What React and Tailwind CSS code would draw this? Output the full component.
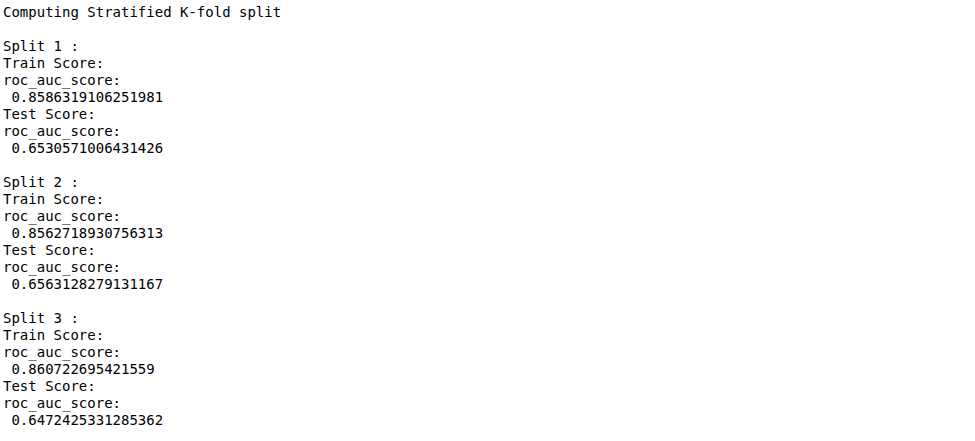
export default function App() {
  const splits = [
    { n: 1, train: '0.8586319106251981', test: '0.6530571006431426' },
    { n: 2, train: '0.8562718930756313', test: '0.6563128279131167' },
    { n: 3, train: '0.860722695421559', test: '0.6472425331285362' },
  ]

  return (
    <div className="w-[975px] h-[441px] bg-white overflow-hidden">
      <pre className="pl-[3px] pt-[4px] text-[14px] leading-[17px] text-black font-['DejaVu_Sans_Mono',monospace] whitespace-pre">
        {'Computing Stratified K-fold split\n'}
        {splits.map((s) => (
          '\nSplit ' + s.n + ' :\n' +
          'Train Score:\nroc_auc_score:\n ' + s.train + '\n' +
          'Test Score:\nroc_auc_score:\n ' + s.test + '\n'
        )).join('')}
      </pre>
    </div>
  )
}
